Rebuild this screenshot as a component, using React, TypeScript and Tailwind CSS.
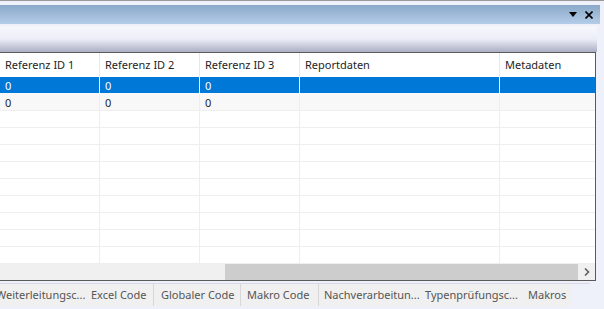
import React from "react";

const columns = [
  { name: "Referenz ID 1", w: "w-[100px]" },
  { name: "Referenz ID 2", w: "w-[100px]" },
  { name: "Referenz ID 3", w: "w-[100px]" },
  { name: "Reportdaten", w: "w-[200px]" },
  { name: "Metadaten", w: "w-[95px]" },
];

const rows = [
  ["0", "0", "0", "", ""],
  ["0", "0", "0", "", ""],
];

const tabs = [
  { name: "Weiterleitungsc...", w: "w-[86px]", pad: "pl-0", shift: "-ml-[4px]", sep: false },
  { name: "Excel Code", w: "w-[68px]", pad: "pl-[5px]", shift: "", sep: true },
  { name: "Globaler Code", w: "w-[87px]", pad: "pl-[7px]", shift: "", sep: true },
  { name: "Makro Code", w: "w-[78px]", pad: "pl-[6px]", shift: "", sep: true },
  { name: "Nachverarbeitun...", w: "w-[101px]", pad: "pl-[5px]", shift: "", sep: false },
  { name: "Typenprüfungsc...", w: "w-[101px]", pad: "pl-[5px]", shift: "", sep: false },
  { name: "Makros", w: "w-[51px]", pad: "pl-[7px]", shift: "", sep: false },
];

const App = () => {
  const emptyRows = Array.from({ length: 9 });

  return (
    <div className="w-[604px] h-[309px] overflow-hidden bg-[#eef0fa] font-['Noto_Sans',sans-serif] text-[11px] text-[#1e1e1e]">
      <div className="h-px bg-[#9a9a9a]" />
      <div className="h-[4px]" />
      {/* title bar */}
      <div className="h-[19px] mr-[4px] bg-gradient-to-b from-[#8ba8c9] to-[#b4cde8] flex items-center justify-end gap-[8px] pr-[7px]">
        <svg width="8" height="5" viewBox="0 0 8 5">
          <path d="M0 0 H8 L4 5 Z" fill="#000" />
        </svg>
        <svg width="8" height="8" viewBox="0 0 8 8">
          <path d="M0.5 0.5 L7.5 7.5 M7.5 0.5 L0.5 7.5" stroke="#000" strokeWidth="1.6" />
        </svg>
      </div>
      <div className="h-[2px]" />
      {/* toolbar */}
      <div className="h-[26px] mr-[7px] bg-gradient-to-b from-[#f7f8fd] via-[#eceef7] to-[#acafc5]" />
      {/* grid */}
      <div className="w-[596px] border-t border-r border-b border-[#5a5a5a] bg-white">
        <div className="flex h-[24px]">
          {columns.map((c, i) => (
            <div
              key={c.name}
              className={`${c.w} shrink-0 flex items-center pl-[5px] pt-px ${i < columns.length - 1 ? "border-r border-[#e8e8e8]" : ""}`}
            >
              {c.name}
            </div>
          ))}
        </div>
        {rows.map((r, ri) => (
          <div
            key={ri}
            className={`flex h-[17px] border-b ${ri === 0 ? "bg-[#0078d7] text-white border-[#f9f9f9]" : "bg-[#f8f8f8] border-[#eeeeee]"}`}
          >
            {r.map((v, ci) => (
              <div
                key={ci}
                className={`${columns[ci].w} shrink-0 flex items-center pl-[5px] leading-none ${ci < columns.length - 1 ? (ri === 0 ? "border-r border-white" : "border-r border-[#eeeeee]") : ""}`}
              >
                {v}
              </div>
            ))}
          </div>
        ))}
        {emptyRows.map((_, ri) => (
          <div key={ri} className="flex h-[17px] border-b border-[#eeeeee]">
            {columns.map((c, ci) => (
              <div
                key={ci}
                className={`${c.w} shrink-0 ${ci < columns.length - 1 ? "border-r border-[#eeeeee]" : ""}`}
              />
            ))}
          </div>
        ))}
        {/* horizontal scrollbar */}
        <div className="h-[16px] bg-[#f0f0f0] flex items-stretch">
          <div className="w-[225px] shrink-0" />
          <div className="w-[353px] shrink-0 bg-[#cdcdcd]" />
          <div className="flex-1 flex items-center justify-center">
            <svg width="6" height="8" viewBox="0 0 6 8">
              <path d="M1 0.5 L4.5 4 L1 7.5" stroke="#606060" strokeWidth="1.6" fill="none" />
            </svg>
          </div>
        </div>
      </div>
      <div className="h-[2px]" />
      <div className="w-[590px] h-px bg-[#d6d6e6]" />
      {/* tabs */}
      <div className="flex h-[22px] w-[572px] bg-[#f0f0f0] text-[#555555] overflow-hidden">
        {tabs.map((t) => (
          <div
            key={t.name}
            className={`${t.w} shrink-0 flex items-center overflow-hidden whitespace-nowrap ${t.pad} ${t.sep ? "border-r border-[#d8d8d8]" : ""}`}
          >
            <span className={t.shift}>{t.name}</span>
          </div>
        ))}
      </div>
    </div>
  );
};

export default App;
